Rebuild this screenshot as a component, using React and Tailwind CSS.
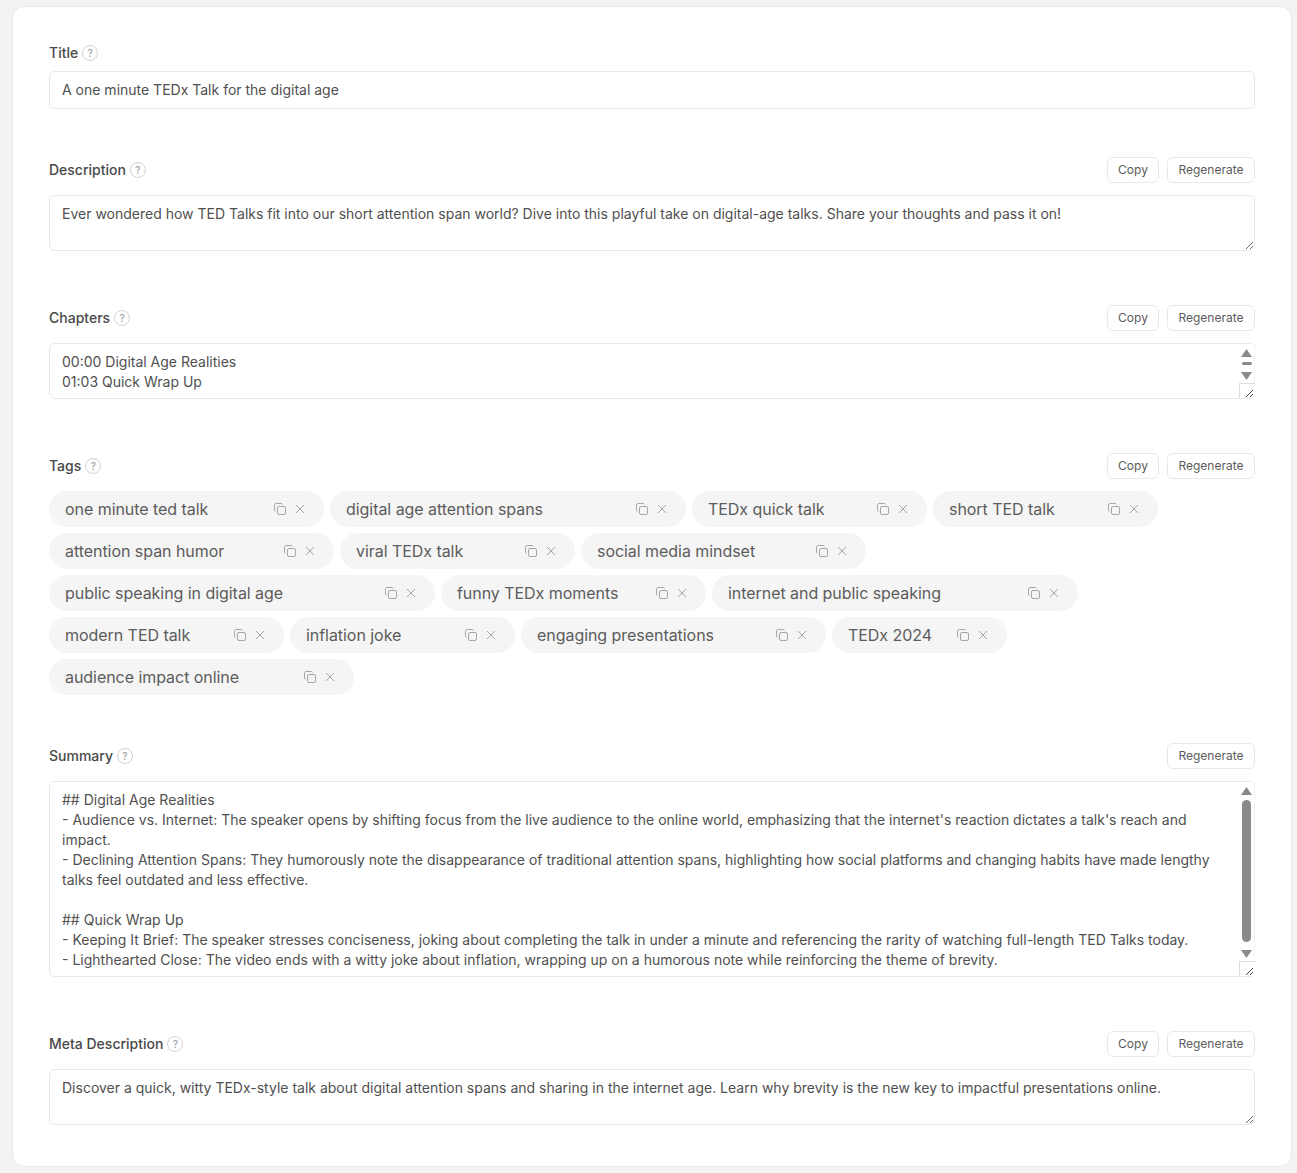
import React from 'react';

const tagRows = [
    [
        { text: 'one minute ted talk', w: 'w-[275px]' },
        { text: 'digital age attention spans', w: 'w-[356px]' },
        { text: 'TEDx quick talk', w: 'w-[235px]' },
        { text: 'short TED talk', w: 'w-[225px]' },
    ],
    [
        { text: 'attention span humor', w: 'w-[285px]' },
        { text: 'viral TEDx talk', w: 'w-[235px]' },
        { text: 'social media mindset', w: 'w-[285px]' },
    ],
    [
        { text: 'public speaking in digital age', w: 'w-[386px]' },
        { text: 'funny TEDx moments', w: 'w-[265px]' },
        { text: 'internet and public speaking', w: 'w-[366px]' },
    ],
    [
        { text: 'modern TED talk', w: 'w-[235px]' },
        { text: 'inflation joke', w: 'w-[225px]' },
        { text: 'engaging presentations', w: 'w-[305px]' },
        { text: 'TEDx 2024', w: 'w-[175px]' },
    ],
    [
        { text: 'audience impact online', w: 'w-[305px]' },
    ],
];

const summary = `## Digital Age Realities
- Audience vs. Internet: The speaker opens by shifting focus from the live audience to the online world, emphasizing that the internet's reaction dictates a talk's reach and impact.
- Declining Attention Spans: They humorously note the disappearance of traditional attention spans, highlighting how social platforms and changing habits have made lengthy talks feel outdated and less effective.

## Quick Wrap Up
- Keeping It Brief: The speaker stresses conciseness, joking about completing the talk in under a minute and referencing the rarity of watching full-length TED Talks today.
- Lighthearted Close: The video ends with a witty joke about inflation, wrapping up on a humorous note while reinforcing the theme of brevity.`;

const Label = ({ children }) => (
    <div className="flex items-center gap-1 text-sm font-medium text-[#484848]">
        <span>{children}</span>
        <span className="flex h-4 w-4 items-center justify-center rounded-full border border-[#d4d4d4] text-[10px] leading-none text-[#a3a3a3]">?</span>
    </div>
);

const Btn = ({ children, w }) => (
    <button className={`h-[26px] ${w} rounded-md border border-[#e8e8e8] bg-white text-xs text-[#5c5c5c]`}>{children}</button>
);

const Header = ({ label, copy = true }) => (
    <div className="flex h-[26px] items-center justify-between">
        <Label>{label}</Label>
        <div className="flex gap-2">
            {copy && <Btn w="w-[52px]">Copy</Btn>}
            <Btn w="w-[88px]">Regenerate</Btn>
        </div>
    </div>
);

const Area = ({ value, h, pr = 'pr-3' }) => (
    <textarea
        readOnly
        value={value}
        className={`block w-full ${h} rounded-md border border-[#e8e8e8] bg-white py-2 pl-3 ${pr} text-sm leading-5 text-[#505050] outline-none`}
    />
);

const UpArrow = () => (
    <svg width="11" height="8" viewBox="0 0 11 8"><path d="M5.5 0 L11 8 H0 Z" fill="#8a8a8a" /></svg>
);

const DownArrow = () => (
    <svg width="11" height="8" viewBox="0 0 11 8"><path d="M0 0 H11 L5.5 8 Z" fill="#8a8a8a" /></svg>
);

// scrollbar strip: sits over the textarea's right edge and hides its rounded corners
const Track = () => (
    <div className="absolute bottom-[1px] right-0 top-[1px] w-[16px] border-r border-[#f2f2f2] bg-white" />
);

// the corner box the browser draws next to a scrollbar
const Corner = () => (
    <div className="absolute bottom-[1px] right-0 h-[15px] w-[16px] border-l border-t border-[#dcdcdc] bg-white">
        <svg width="15" height="14" viewBox="0 0 15 14">
            <path d="M6 13 L13 6 M10 13 L13 10" stroke="#4a4a4a" strokeWidth="1" />
        </svg>
    </div>
);

const Tag = ({ text, w }) => (
    <div className={`flex h-9 ${w} items-center justify-between rounded-full bg-[#f5f5f5] pl-4 pr-[18px] text-base tracking-[-0.05px] text-[#5c5c5c]`}>
        <span>{text}</span>
        <div className="flex items-center gap-[8px]">
            <svg width="12" height="12" viewBox="0 0 12 12" fill="none" stroke="#a6a6a6" strokeWidth="1">
                <rect x="3.5" y="3.5" width="8" height="8" rx="1.5" />
                <path d="M1.5 8.5 C0.9 8.3 0.5 7.8 0.5 7.2 V2 C0.5 1.2 1.2 0.5 2 0.5 H7.2 C7.8 0.5 8.3 0.9 8.5 1.5" />
            </svg>
            <svg width="12" height="12" viewBox="0 0 12 12" fill="none" stroke="#a6a6a6" strokeWidth="1">
                <path d="M2 2 L10 10 M10 2 L2 10" />
            </svg>
        </div>
    </div>
);

const App = () => {
    return (
        <div className="min-h-[1173px] bg-[#f3f3f3] pb-[6px] pl-3 pr-[5px] pt-[6px] font-['Inter',sans-serif]">
            <div className="h-[1161px] rounded-xl border border-[#e8e8e8] bg-white px-9 pt-[36px]">
                <div className="flex h-[20px] items-center"><Label>Title</Label></div>
                <div className="mt-2 flex h-[38px] items-center rounded-md border border-[#e8e8e8] px-3 text-sm text-[#505050]">
                    A one minute TEDx Talk for the digital age
                </div>

                <div className="mt-12"><Header label="Description" /></div>
                <div className="mt-3">
                    <Area h="h-14" value="Ever wondered how TED Talks fit into our short attention span world? Dive into this playful take on digital-age talks. Share your thoughts and pass it on!" />
                </div>

                <div className="mt-[54px]"><Header label="Chapters" /></div>
                <div className="relative mt-3">
                    <Area h="h-14" pr="pr-6" value={'00:00 Digital Age Realities\n01:03 Quick Wrap Up'} />
                    <Track />
                    <div className="absolute right-[3px] top-[6px] flex flex-col items-center">
                        <UpArrow />
                        <div className="mb-[7px] mt-[5px] h-[3px] w-[10px] rounded-sm bg-[#8a8a8a]" />
                        <DownArrow />
                    </div>
                    <Corner />
                </div>

                <div className="mt-[54px]"><Header label="Tags" /></div>
                <div className="mt-3 flex flex-col gap-[6px]">
                    {tagRows.map((row, i) => (
                        <div key={i} className="flex gap-[6px]">
                            {row.map((tag) => (
                                <Tag key={tag.text} text={tag.text} w={tag.w} />
                            ))}
                        </div>
                    ))}
                </div>

                <div className="mt-12"><Header label="Summary" copy={false} /></div>
                <div className="relative mt-3">
                    <Area h="h-[196px]" pr="pr-[40px]" value={summary} />
                    <Track />
                    <div className="absolute bottom-[19px] right-[3px] top-[6px] flex flex-col items-center">
                        <UpArrow />
                        <div className="mb-[8px] mt-[5px] w-[9px] flex-1 rounded-full bg-[#8a8a8a]" />
                        <DownArrow />
                    </div>
                    <Corner />
                </div>

                <div className="mt-[54px]"><Header label="Meta Description" /></div>
                <div className="mt-3">
                    <Area h="h-14" value="Discover a quick, witty TEDx-style talk about digital attention spans and sharing in the internet age. Learn why brevity is the new key to impactful presentations online." />
                </div>
            </div>
        </div>
    );
};

export default App;
